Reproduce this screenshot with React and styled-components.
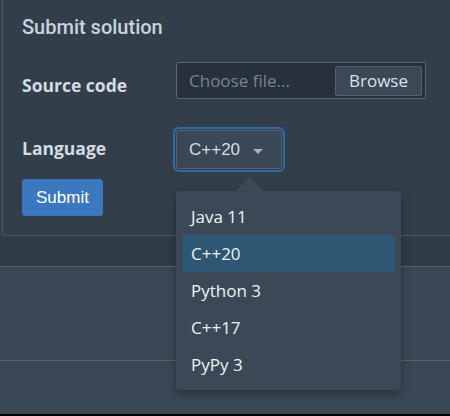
import React from 'react';
import styled, { createGlobalStyle } from 'styled-components';

const Global = createGlobalStyle`
  html { background: #000; }
  body { margin: 0; font-family: "Open Sans", sans-serif; }
`;

const Page = styled.div`
  width: 450px;
  height: 414px;
  overflow: hidden;
  background: #323f4b;
  display: flex;
  flex-direction: column;
`;

const Card = styled.section`
  margin-left: 2px;
  background: #323f4b;
  border-left: 1px solid #4b5865;
  border-bottom: 1px solid #4b5865;
  border-bottom-left-radius: 4px;
  padding: 15px 0 19px 19px;
  display: flex;
  flex-direction: column;
  align-items: flex-start;
`;

const Heading = styled.h2`
  margin: 0 0 23px;
  font-family: Roboto, "Open Sans", sans-serif;
  font-weight: 500;
  font-size: 20px;
  line-height: 24px;
  color: #c8d3dd;
`;

const FormRow = styled.div`
  display: grid;
  grid-template-columns: 154px auto;
  align-items: start;
  margin-bottom: ${(p) => p.$gap}px;
`;

const Label = styled.label`
  font-weight: 700;
  font-size: 17.5px;
  line-height: 24px;
  color: #d3dbe2;
  padding-top: ${(p) => p.$offset}px;
`;

const FileBox = styled.div`
  box-sizing: border-box;
  width: 250px;
  height: 37px;
  display: flex;
  align-items: center;
  padding: 0 3px 0 12px;
  background: #26313b;
  border: 1px solid #5b6671;
  border-radius: 2px;
`;

const Placeholder = styled.span`
  flex: 1;
  font-size: 17px;
  color: #78848e;
`;

const Browse = styled.button`
  box-sizing: border-box;
  height: 30px;
  padding: 0 13px;
  background: #3b4856;
  border: 1px solid #56616c;
  border-radius: 2px;
  color: #dbe2e8;
  font-family: "Open Sans", sans-serif;
  font-size: 17px;
  line-height: 1;
`;

const SelectWrap = styled.div`
  position: relative;
`;

const Select = styled.div`
  box-sizing: border-box;
  height: 39px;
  display: inline-flex;
  align-items: center;
  gap: 13px;
  padding: 0 18px 0 12px;
  background: #3a4754;
  border: 1px solid #56626d;
  border-radius: 3px;
  box-shadow: 0 0 0 1px #33404c, 0 0 0 3px #2d69ab;
  color: #d6dde3;
  font-family: "Liberation Sans", Arial, sans-serif;
  font-size: 17px;
`;

const Caret = styled.span`
  width: 0;
  height: 0;
  margin-top: 4px;
  border-left: 5px solid transparent;
  border-right: 5px solid transparent;
  border-top: 5px solid #a9b2ba;
`;

const Menu = styled.ul`
  position: absolute;
  top: 61px;
  left: 0;
  z-index: 2;
  box-sizing: border-box;
  width: 225px;
  margin: 0;
  padding: 7px 6px;
  list-style: none;
  background: #3b4956;
  border-radius: 4px;
  box-shadow: 0 3px 10px rgba(0, 0, 0, 0.35);

  &::before {
    content: "";
    position: absolute;
    top: -10px;
    left: 64px;
    width: 20px;
    height: 20px;
    background: #3b4956;
    border-radius: 2px;
    transform: rotate(45deg);
  }
`;

const Option = styled.li`
  position: relative;
  height: 37px;
  line-height: 37px;
  padding-left: 9px;
  border-radius: 2px;
  font-size: 17px;
  color: #eef2f6;
  background: ${(p) => (p.$active ? '#2d5773' : 'transparent')};
`;

const SubmitButton = styled.button`
  box-sizing: border-box;
  height: 37px;
  margin-top: 10px;
  padding: 0 13px;
  background: #3b78c0;
  border: 1px solid #3a74b9;
  border-radius: 3px;
  color: #ffffff;
  font-family: "Liberation Sans", Arial, sans-serif;
  font-size: 17px;
`;

const Strip = styled.div`
  height: 30px;
  background: #2f3c48;
`;

const TableRow = styled.div`
  height: ${(p) => p.$h}px;
  border-top: 1px solid #56636f;
  background: #3a4855;
`;

const languages = ['Java 11', 'C++20', 'Python 3', 'C++17', 'PyPy 3'];

export default function App() {
  return (
    <>
      <Global />
      <Page>
        <Card>
          <Heading>Submit solution</Heading>
          <FormRow $gap={31}>
            <Label $offset={11}>Source code</Label>
            <FileBox>
              <Placeholder>Choose file...</Placeholder>
              <Browse>Browse</Browse>
            </FileBox>
          </FormRow>
          <FormRow $gap={0}>
            <Label $offset={6}>Language</Label>
            <SelectWrap>
              <Select>
                C++20
                <Caret />
              </Select>
              <Menu>
                {languages.map((l) => (
                  <Option key={l} $active={l === 'C++20'}>
                    {l}
                  </Option>
                ))}
              </Menu>
            </SelectWrap>
          </FormRow>
          <SubmitButton>Submit</SubmitButton>
        </Card>
        <Strip />
        <TableRow $h={93} />
        <TableRow $h={53} />
      </Page>
    </>
  );
}
